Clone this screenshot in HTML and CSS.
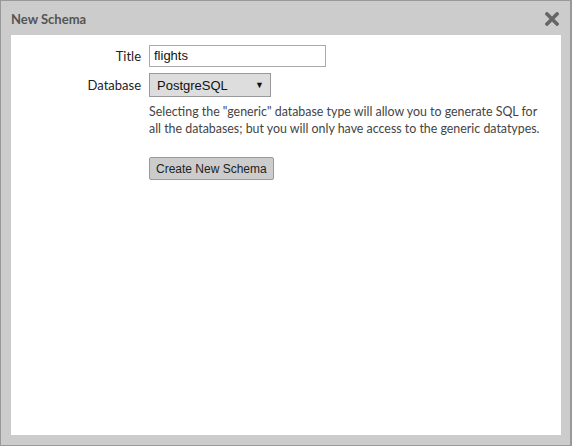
FILE: index.html
```html
<!DOCTYPE html>
<html>
<head>
<meta charset="utf-8">
<link rel="stylesheet" href="styles.css">
</head>
<body>
<div class="dialog">
  <div class="header">
    <span class="title">New Schema</span>
    <svg class="close" width="14" height="14" viewBox="0 0 14 14"><path d="M2 2 L12 12 M12 2 L2 12" stroke="#666" stroke-width="3.6" stroke-linecap="square"/></svg>
  </div>
  <div class="content">
    <div class="form">
      <label class="label">Title</label>
      <div class="field"><div class="input">flights</div></div>
      <label class="label">Database</label>
      <div class="field"><div class="select"><span>PostgreSQL</span><span class="arrow">▼</span></div></div>
      <div></div>
      <p class="help">Selecting the "generic" database type will allow you to generate SQL for all the databases; but you will only have access to the generic datatypes.</p>
      <div></div>
      <div class="field"><button class="btn">Create New Schema</button></div>
    </div>
  </div>
</div>
</body>
</html>
```
FILE: styles.css
```css
html, body { margin: 0; padding: 0; }
body { width: 572px; height: 446px; overflow: hidden; background: #fff; }
.dialog {
  box-sizing: border-box;
  width: 572px; height: 446px;
  background: #cccccc;
  border: 1px solid #999;
  border-right-width: 2px;
  display: flex; flex-direction: column;
  padding: 0 9px 10px 10px;
  font-family: "Source Sans Pro", Lato, "Noto Sans", sans-serif;
}
.header {
  height: 34px;
  display: flex; align-items: center; justify-content: space-between;
}
.title { font-weight: bold; font-size: 13px; color: #555; padding-top: 2px; }
.close { margin-right: 2px; margin-top: 2px; }
.content { flex: 1; background: #fff; padding-top: 10px; }
.form {
  display: grid;
  grid-template-columns: 130px 1fr;
  column-gap: 8px;
  row-gap: 6px;
  align-items: center;
}
.label { text-align: right; font-size: 13px; color: #222; }
.input {
  box-sizing: border-box; width: 177px; height: 22px;
  border: 1px solid #aaa; background: #fff;
  font: 13px "Liberation Sans", Arial, sans-serif; color: #111;
  padding: 0 4px; line-height: 20px;
}
.select {
  box-sizing: border-box; width: 122px; height: 24px;
  border: 1px solid #999; background: #ddd;
  font: 13px "Liberation Sans", Arial, sans-serif; color: #111;
  padding: 0 6px 0 7px;
  display: flex; align-items: center; justify-content: space-between;
}
.arrow { font-size: 9px; }
.help { margin: 0; max-width: 395px; font-size: 12.4px; line-height: 17px; color: #444; padding-top: 0; }
.btn {
  margin-top: 14px;
  box-sizing: border-box; height: 23px; padding: 0 6px;
  border: 1px solid #999; border-radius: 2px; background: #ccc;
  font: 12px "Liberation Sans", Arial, sans-serif; color: #222;
}
```
